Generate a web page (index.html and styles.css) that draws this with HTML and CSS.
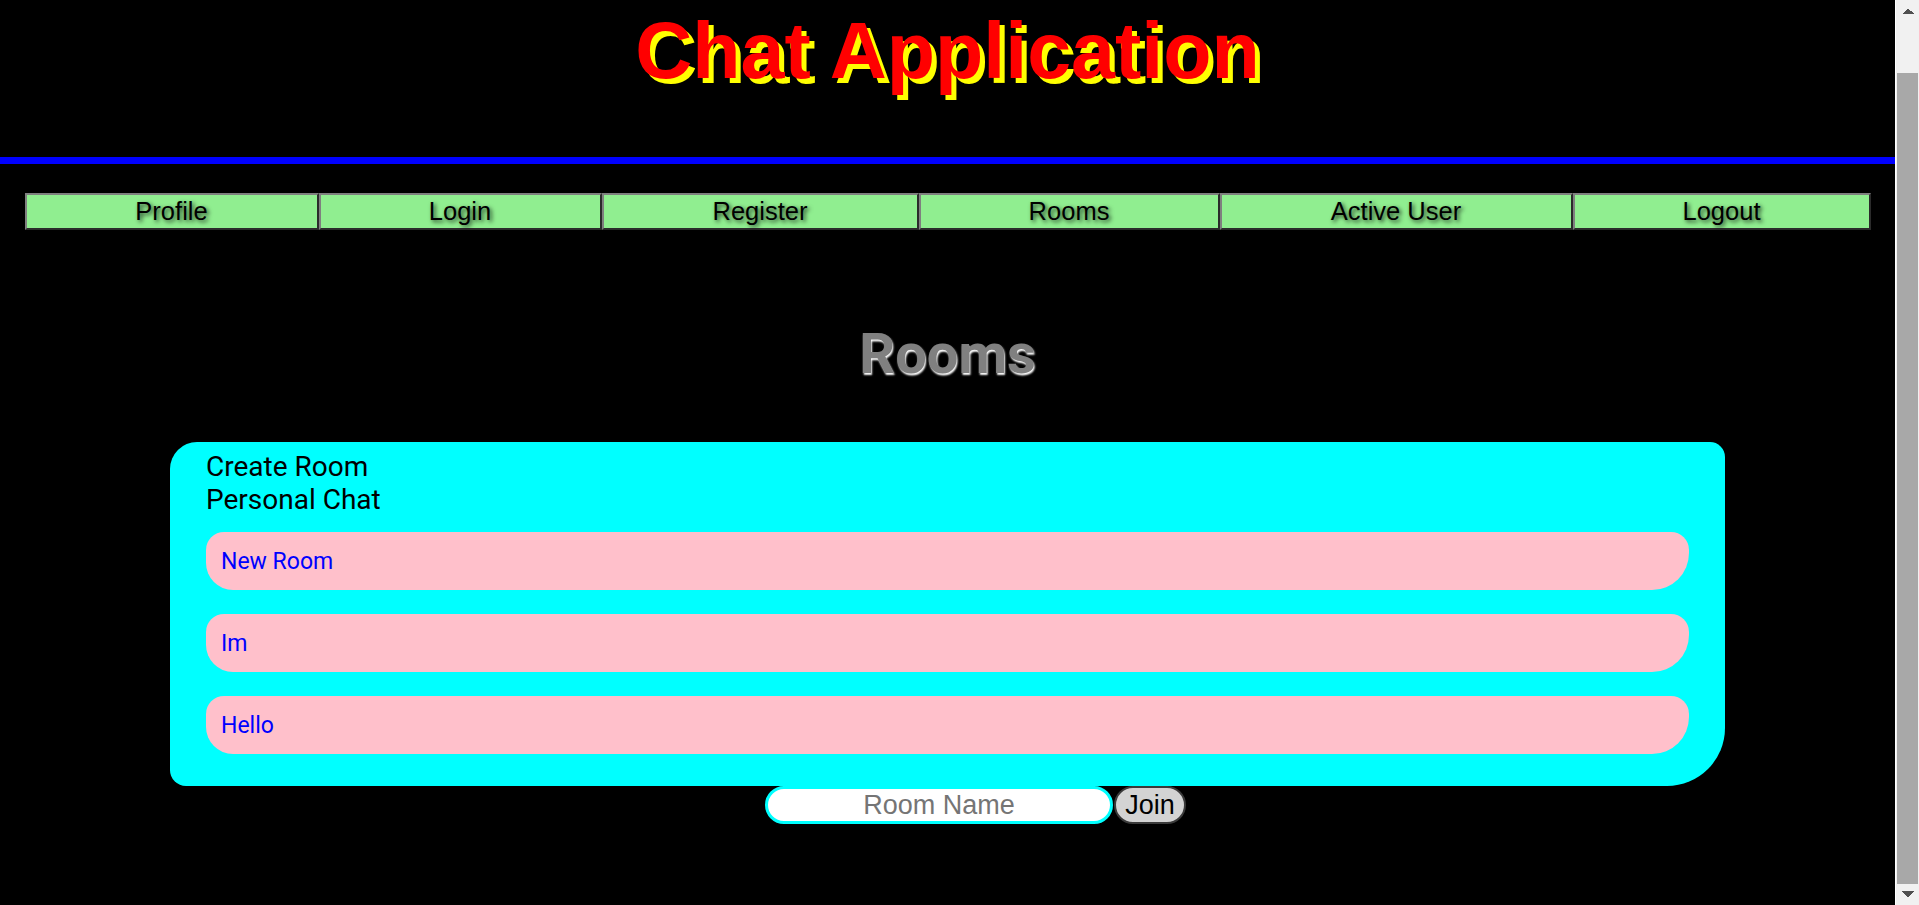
FILE: index.html
```html
<!DOCTYPE html>
<html lang="en">
<head>
<meta charset="utf-8">
<title>Chat Application</title>
<link rel="stylesheet" href="styles.css">
</head>
<body>
<div class="page">
  <header class="site-header">
    <h1 class="site-title">Chat Application</h1>
  </header>
  <nav class="main-nav">
    <a class="nav-item">Profile</a>
    <a class="nav-item">Login</a>
    <a class="nav-item">Register</a>
    <a class="nav-item">Rooms</a>
    <a class="nav-item">Active User</a>
    <a class="nav-item">Logout</a>
  </nav>
  <main class="rooms-page">
    <h2 class="rooms-title">Rooms</h2>
    <section class="rooms-card">
      <div class="card-link">Create Room</div>
      <div class="card-link">Personal Chat</div>
      <ul class="room-list">
        <li class="room-item">New Room</li>
        <li class="room-item">Im</li>
        <li class="room-item">Hello</li>
      </ul>
    </section>
    <form class="join-form">
      <input class="room-input" type="text" placeholder="Room Name">
      <button class="join-btn" type="button">Join</button>
    </form>
  </main>
</div>
<div class="fake-scrollbar" aria-hidden="true">
  <div class="sb-btn sb-up"></div>
  <div class="sb-track"><div class="sb-thumb"></div></div>
  <div class="sb-btn sb-down"></div>
</div>
</body>
</html>
```

FILE: styles.css
```css
html, body {
  margin: 0;
  padding: 0;
  background: #000;
  overflow: hidden;
}

.page {
  margin-right: 24px;
  min-height: 905px;
  font-family: Roboto, "Liberation Sans", Arial, sans-serif;
}

/* window scrollbar (drawn, since the capture hides the native one) */
.fake-scrollbar {
  position: fixed;
  top: 0;
  right: 0;
  width: 24px;
  height: 100vh;
  box-sizing: border-box;
  border-left: 1px solid #ffffff;
  background: #f1f1f1;
  display: flex;
  flex-direction: column;
}
.sb-btn {
  height: 21px;
  flex: none;
  background-repeat: no-repeat;
  background-size: 12px 6px;
}
.sb-up {
  background-image: conic-gradient(from 135deg at 50% 0, #505050 0 90deg, transparent 0);
  background-position: center 8px;
}
.sb-down {
  background-image: conic-gradient(from -45deg at 50% 100%, #505050 0 90deg, transparent 0);
  background-position: center 7px;
}
.sb-track {
  flex: 1;
  display: flex;
  flex-direction: column;
  justify-content: flex-end;
  padding: 0 1px 0 1px;
}
.sb-thumb {
  height: 811px;
  background: #a8a8a8;
}

.site-header {
  padding-top: 5px;
  padding-bottom: 60px;
  border-bottom: 7px solid #0000ff;
}

.site-title {
  margin: 0;
  text-align: center;
  font-family: "Liberation Sans", Arial, sans-serif;
  font-weight: bold;
  font-size: 79px;
  line-height: 92px;
  color: #ff0000;
  text-shadow: 5px 5px 0 #ffff00;
}

.main-nav {
  display: grid;
  grid-template-columns: 294px 283px 317px 301px 353px 298px;
  justify-content: center;
  margin-top: 29px;
}

.nav-item {
  box-sizing: border-box;
  height: 37px;
  display: flex;
  align-items: center;
  justify-content: center;
  background: #90ee90;
  border-style: solid;
  border-width: 2px;
  border-color: #7f7f7f #2b2b2b #2b2b2b #7f7f7f;
  font-family: "Liberation Sans", Arial, sans-serif;
  font-size: 25.5px;
  color: #000;
  text-shadow: 2px 2px 4px rgba(0, 0, 0, 0.75);
}

.rooms-title {
  margin: 91px 0 0;
  text-align: center;
  font-family: Roboto, sans-serif;
  font-weight: bold;
  font-size: 56px;
  line-height: normal;
  color: #808080;
  text-shadow: 1px 2px 2px #ffffff;
}

.rooms-card {
  box-sizing: border-box;
  width: 1555px;
  margin: 55px auto 0;
  padding: 8px 36px 32px;
  background: #00ffff;
  border-radius: 27px 15px 58px 16px;
}

.card-link {
  font-family: Roboto, sans-serif;
  font-size: 28px;
  line-height: normal;
  color: #000;
}

.room-list {
  list-style: none;
  margin: 16px 0 0;
  padding: 0;
  display: flex;
  flex-direction: column;
  gap: 24px;
}

.room-item {
  box-sizing: border-box;
  height: 58px;
  display: flex;
  align-items: center;
  padding-left: 15px;
  background: #ffc0cb;
  border-radius: 18px 18px 37px 27px;
  font-family: Roboto, sans-serif;
  font-size: 23px;
  color: #0000ff;
}

.join-form {
  display: flex;
  justify-content: center;
  padding-left: 56px;
  margin: 0;
}

.room-input {
  box-sizing: border-box;
  width: 348px;
  height: 38px;
  margin: 0;
  padding: 0 10px;
  border: 3px solid #00ffff;
  border-radius: 19px;
  background: #fff;
  font-family: "Liberation Sans", Arial, sans-serif;
  font-size: 27px;
  text-align: center;
  color: #000;
  outline: none;
}
.room-input::placeholder {
  color: #757575;
}

.join-btn {
  box-sizing: border-box;
  width: 72px;
  height: 38px;
  margin: 0 0 0 1px;
  padding: 0;
  border: 2px solid #3a3a3a;
  border-radius: 19px;
  background: #d3d3d3;
  font-family: "Liberation Sans", Arial, sans-serif;
  font-size: 27px;
  color: #000;
}
```
